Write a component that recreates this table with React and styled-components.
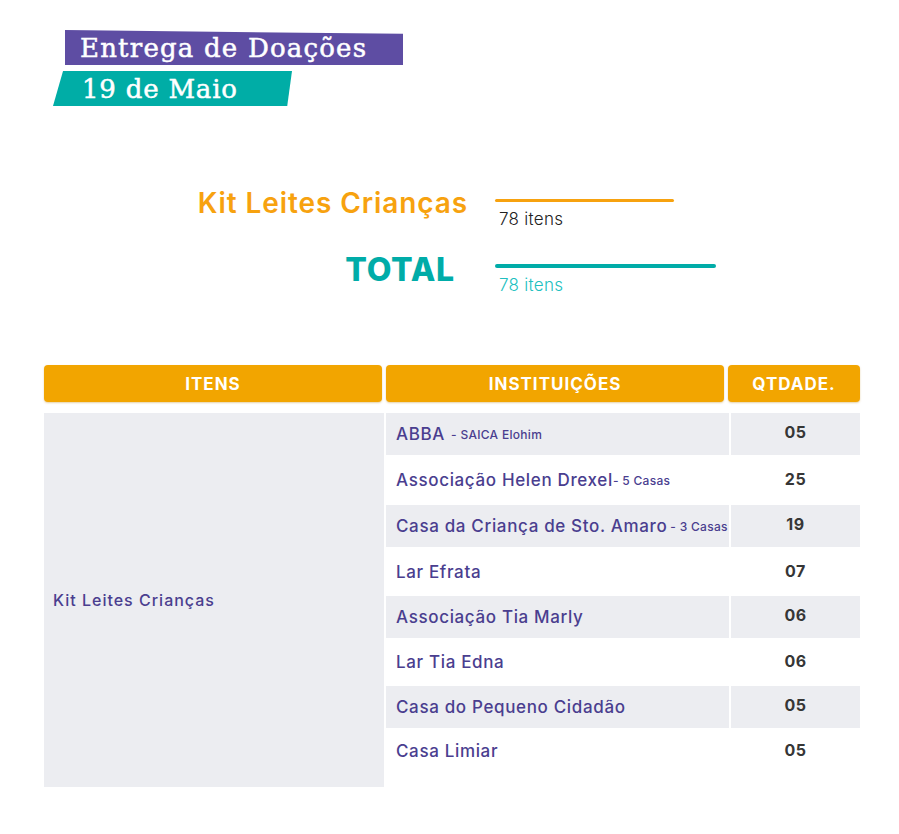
import React from "react";
import styled, { createGlobalStyle } from "styled-components";

const GlobalStyle = createGlobalStyle`
  body {
    margin: 0;
    background: #fff;
    font-family: Inter, "Noto Sans", sans-serif;
  }
`;

const Page = styled.div`
  width: 899px;
  height: 834px;
  padding-top: 30px;
  box-sizing: border-box;
`;

const Banner = styled.div`
  margin-left: 53px;
  display: flex;
  flex-direction: column;
  align-items: flex-start;
  gap: 6px;
`;

const Tag = styled.div`
  width: ${(props) => props.width}px;
  height: 35px;
  margin-left: ${(props) => props.offset || 0}px;
  padding-left: ${(props) => props.pad}px;
  box-sizing: border-box;
  display: flex;
  align-items: center;
  background: ${(props) => props.bg};
  clip-path: ${(props) => props.clip};
  color: #fff;
  font-family: "DejaVu Serif", serif;
  font-size: 26px;
  letter-spacing: ${(props) => props.spacing}px;
  -webkit-text-stroke: 0.5px #fff;
`;

const Summary = styled.div`
  margin-top: 93px;
  display: grid;
  grid-template-columns: 468px 248px;
  column-gap: 27px;
  row-gap: 36px;
  align-items: start;
`;

const Label = styled.div`
  text-align: right;
  margin-top: ${(props) => props.top}px;
  padding-right: ${(props) => props.shift || 0}px;
  color: ${(props) => props.color};
  font-size: ${(props) => props.size}px;
  font-weight: ${(props) => props.weight};
  letter-spacing: ${(props) => props.spacing}px;
  line-height: 1;
`;

const Amount = styled.div`
  display: flex;
  flex-direction: column;
  gap: 8px;
`;

const Bar = styled.div`
  width: ${(props) => props.length}px;
  height: ${(props) => props.thick}px;
  border-radius: 3px;
  background: ${(props) => props.color};
`;

const Count = styled.div`
  padding-left: 4px;
  color: ${(props) => props.color};
  font-size: 17px;
  font-weight: 300;
  letter-spacing: 0.3px;
  line-height: 18px;
`;

const Table = styled.div`
  margin: 71px 0 0 44px;
  width: 816px;
`;

const HeadRow = styled.div`
  display: grid;
  grid-template-columns: 338px 338px 132px;
  column-gap: 4px;
`;

const HeadCell = styled.div`
  height: 37px;
  border-radius: 4px;
  background: #f2a500;
  box-shadow: 0 1px 2px rgba(180, 120, 0, 0.35);
  color: #fff;
  font-size: 17px;
  font-weight: 700;
  letter-spacing: 1px;
  display: flex;
  align-items: center;
  justify-content: center;
`;

const Body = styled.div`
  margin-top: 11px;
  display: grid;
  grid-template-columns: 340px 1fr;
  column-gap: 2px;
`;

const ItemCell = styled.div`
  background: #ecedf1;
  height: 374px;
  padding-left: 9px;
  display: flex;
  align-items: center;
  color: #4a3e8f;
  font-size: 16px;
  font-weight: 500;
  letter-spacing: 1px;
`;

const Rows = styled.div`
  display: flex;
  flex-direction: column;
`;

const Row = styled.div`
  height: ${(props) => props.height}px;
  display: grid;
  grid-template-columns: 343px 129px;
  column-gap: 2px;
`;

const NameCell = styled.div`
  background: ${(props) => (props.shaded ? "#ecedf1" : "#fff")};
  padding: 0 0 ${(props) => props.lift}px 10px;
  display: flex;
  align-items: center;
  white-space: nowrap;
  overflow: hidden;
  color: #4a3e8f;
  font-size: 17px;
  font-weight: 500;
  letter-spacing: 0.65px;
`;

const Note = styled.span`
  margin-left: ${(props) => props.gap}px;
  font-size: ${(props) => props.size}px;
  font-weight: 500;
  letter-spacing: 0.3px;
`;

const QtyCell = styled(NameCell)`
  padding: 0 0 ${(props) => props.lift}px;
  justify-content: center;
  color: #363636;
  font-size: 16px;
  font-weight: 700;
  letter-spacing: 0.5px;
`;

const rows = [
  { name: "ABBA", note: "- SAICA Elohim", noteSize: 12, noteGap: 6, qty: "05", h: 42, shaded: true },
  { name: "Associação Helen Drexel", note: "- 5 Casas", noteSize: 12, noteGap: 0, qty: "25", h: 50 },
  { name: "Casa da Criança de Sto. Amaro", note: "- 3 Casas", noteSize: 12, noteGap: 3, qty: "19", h: 42, shaded: true },
  { name: "Lar Efrata", qty: "07", h: 49 },
  { name: "Associação Tia Marly", qty: "06", h: 42, shaded: true },
  { name: "Lar Tia Edna", qty: "06", h: 48 },
  { name: "Casa do Pequeno Cidadão", qty: "05", h: 42, shaded: true },
  { name: "Casa Limiar", qty: "05", h: 58, lift: 12, qtyLift: 14 },
];

export default function App() {
  return (
    <Page>
      <GlobalStyle />
      <Banner>
        <Tag
          width={338}
          offset={12}
          pad={15}
          spacing={1.2}
          bg="#5e4da3"
          clip="polygon(0 0, 100% 11%, 100% 100%, 0 100%)"
        >
          Entrega de Doações
        </Tag>
        <Tag
          width={239}
          pad={29}
          spacing={0.8}
          bg="#00ada6"
          clip="polygon(4.2% 0, 100% 0, 98% 100%, 0 100%)"
        >
          19 de Maio
        </Tag>
      </Banner>

      <Summary>
        <Label color="#f7a20f" size={28} weight={600} spacing={0.9} top={-10}>
          Kit Leites Crianças
        </Label>
        <Amount>
          <Bar color="#f7a20f" length={179} thick={3} />
          <Count color="#222">78 itens</Count>
        </Amount>
        <Label color="#00aca8" size={32} weight={800} spacing={0.8} top={-10} shift={13}>
          TOTAL
        </Label>
        <Amount>
          <Bar color="#00aca8" length={221} thick={4} />
          <Count color="#21bfc0">78 itens</Count>
        </Amount>
      </Summary>

      <Table>
        <HeadRow>
          <HeadCell>ITENS</HeadCell>
          <HeadCell>INSTITUIÇÕES</HeadCell>
          <HeadCell>QTDADE.</HeadCell>
        </HeadRow>
        <Body>
          <ItemCell>Kit Leites Crianças</ItemCell>
          <Rows>
            {rows.map((row) => (
              <Row key={row.name} height={row.h}>
                <NameCell shaded={row.shaded} lift={row.lift || 0}>
                  {row.name}
                  {row.note && (
                    <Note size={row.noteSize} gap={row.noteGap}>
                      {row.note}
                    </Note>
                  )}
                </NameCell>
                <QtyCell shaded={row.shaded} lift={row.qtyLift || (row.shaded ? 4 : 2)}>
                  {row.qty}
                </QtyCell>
              </Row>
            ))}
          </Rows>
        </Body>
      </Table>
    </Page>
  );
}
